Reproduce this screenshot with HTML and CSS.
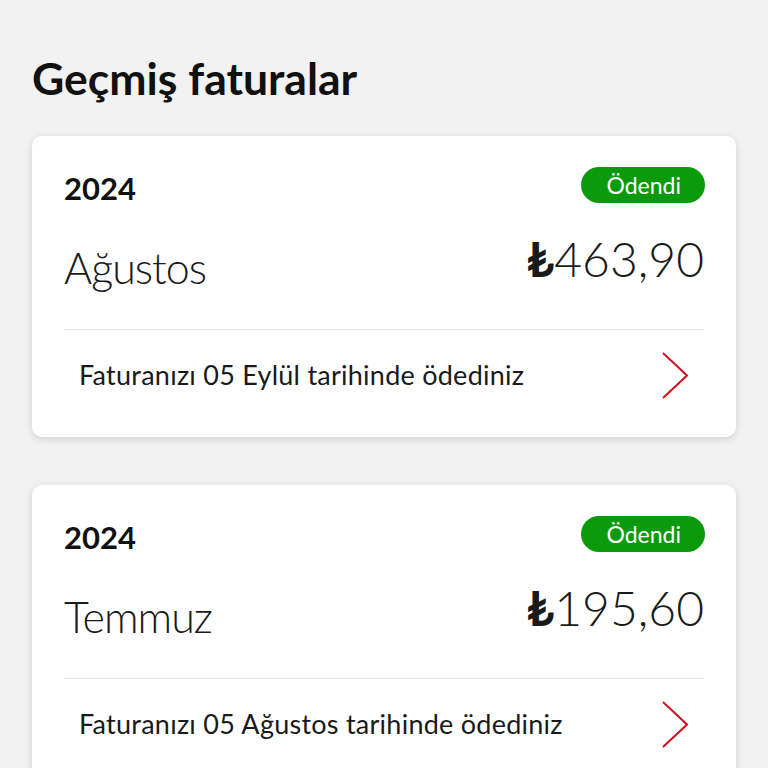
FILE: index.html
```html
<!DOCTYPE html>
<html lang="tr">
<head>
<meta charset="utf-8">
<title>Geçmiş faturalar</title>
<link rel="stylesheet" href="styles.css">
</head>
<body>
<main class="page">
  <h1 class="title">Geçmiş faturalar</h1>
  <section class="bills">
    <article class="card">
      <div class="card-head">
        <span class="year">2024</span>
        <span class="badge">Ödendi</span>
      </div>
      <div class="card-main">
        <span class="month">Ağustos</span>
        <span class="amount"><span class="cur">₺</span>463,90</span>
      </div>
      <a class="card-row" href="#">
        <span class="row-text">Faturanızı 05 Eylül tarihinde ödediniz</span>
        <svg class="chev" width="26" height="47" viewBox="0 0 26 47"><polyline points="1,1 25,23.5 1,46" fill="none" stroke="#d0101e" stroke-width="2"/></svg>
      </a>
    </article>
    <article class="card">
      <div class="card-head">
        <span class="year">2024</span>
        <span class="badge">Ödendi</span>
      </div>
      <div class="card-main">
        <span class="month">Temmuz</span>
        <span class="amount"><span class="cur">₺</span>195,60</span>
      </div>
      <a class="card-row" href="#">
        <span class="row-text">Faturanızı 05 Ağustos tarihinde ödediniz</span>
        <svg class="chev" width="26" height="47" viewBox="0 0 26 47"><polyline points="1,1 25,23.5 1,46" fill="none" stroke="#d0101e" stroke-width="2"/></svg>
      </a>
    </article>
  </section>
</main>
</body>
</html>
```
FILE: styles.css
```css
html, body {
  margin: 0;
  padding: 0;
}
body {
  background: #f2f2f2;
  font-family: Lato, "Open Sans", "DejaVu Sans", sans-serif;
  color: #1a1a1a;
}
.page {
  padding: 52px 32px 0;
}
.title {
  margin: 0 0 32px;
  font-size: 44.5px;
  line-height: 52px;
  font-weight: 700;
  color: #111;
}
.bills {
  display: flex;
  flex-direction: column;
  gap: 48px;
}
.card {
  background: #fff;
  border-radius: 10px;
  box-shadow: 0 2px 8px rgba(0, 0, 0, 0.15);
  padding: 31px 32px 17px;
  display: flex;
  flex-direction: column;
}
.card-head {
  display: flex;
  justify-content: space-between;
  align-items: flex-start;
  height: 36px;
}
.year {
  font-size: 31px;
  line-height: 36px;
  font-weight: 700;
  padding-top: 3px;
  color: #111;
}
.badge {
  background: #0b9a0b;
  color: #fff;
  font-size: 23px;
  line-height: 36px;
  height: 36px;
  padding: 0 24px 0 25px;
  margin-right: -1px;
  border-radius: 18px;
}
.card-main {
  display: flex;
  justify-content: space-between;
  align-items: flex-start;
  margin-top: 28px;
  padding-bottom: 35px;
  border-bottom: 1px solid #e4e4e4;
}
.month {
  font-size: 43px;
  line-height: 52px;
  font-weight: 300;
  letter-spacing: -1px;
  margin-top: 11px;
}
.amount {
  font-size: 48px;
  line-height: 56px;
  font-weight: 300;
}
.cur {
  font-weight: 700;
}
.card-row {
  display: flex;
  align-items: center;
  justify-content: space-between;
  height: 90px;
  padding: 0 16px 0 15px;
  color: #1a1a1a;
  text-decoration: none;
}
.row-text {
  font-size: 27px;
  line-height: 32px;
  letter-spacing: 0.25px;
}
.chev {
  display: block;
}
```
